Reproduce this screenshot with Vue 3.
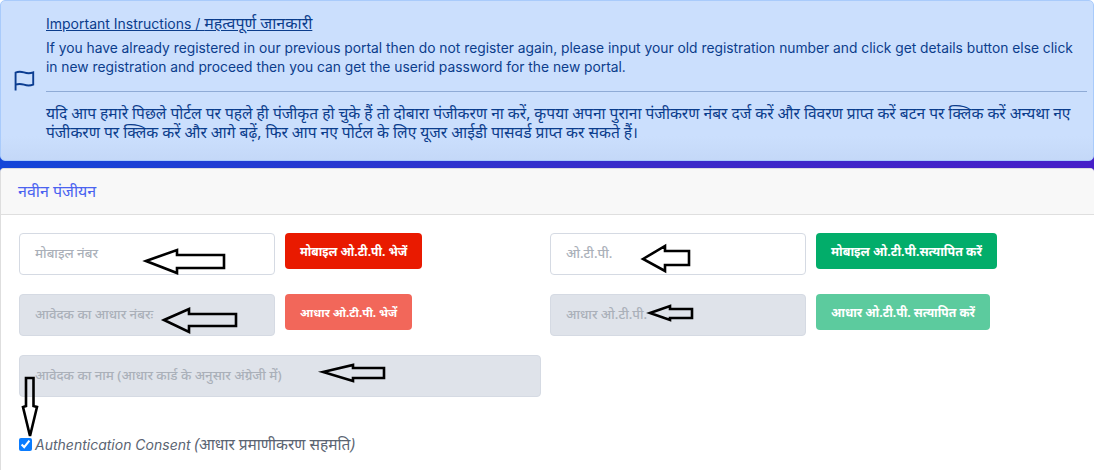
<script setup>
</script>

<template>
  <div class="page">
    <div class="top">
      <div class="alert">
        <div class="flag-col">
          <svg class="flag" viewBox="0 0 20 20" width="21" height="21" fill="none" stroke="#0b3d91" stroke-width="1.8">
            <path d="M1.5 19.5V2.500C4 1.300 6.500 1.300 9.500 2.300C12.500 3.300 15.500 3.300 18.300 2.300V14C15.500 15 12.500 15 9.500 14C6.500 13 4 13 1.500 14" />
          </svg>
        </div>
        <div class="alert-body">
          <div class="title">Important Instructions / <span class="hi">महत्वपूर्ण जानकारी</span></div>
          <p class="para en">If you have already registered in our previous portal then do not register again, please input your old registration number and click get details button else click in new registration and proceed then you can get the userid password for the new portal.</p>
          <hr class="rule" />
          <p class="para hi">यदि आप हमारे पिछले पोर्टल पर पहले ही पंजीकृत हो चुके हैं तो दोबारा पंजीकरण ना करें, कृपया अपना पुराना पंजीकरण नंबर दर्ज करें और विवरण प्राप्त करें बटन पर क्लिक करें अन्यथा नए पंजीकरण पर क्लिक करें और आगे बढ़ें, फिर आप नए पोर्टल के लिए यूजर आईडी पासवर्ड प्राप्त कर सकते हैं।</p>
        </div>
      </div>
    </div>

    <div class="card">
      <div class="card-head">नवीन पंजीयन</div>
      <div class="card-body">
        <div class="grid">
          <div class="cell">
            <div class="field">मोबाइल नंबर</div>
            <button class="btn red">मोबाइल ओ.टी.पी. भेजें</button>
          </div>
          <div class="cell">
            <div class="field">ओ.टी.पी.</div>
            <button class="btn green">मोबाइल ओ.टी.पी.सत्यापित करें</button>
          </div>
          <div class="cell">
            <div class="field off">आवेदक का आधार नंबरः</div>
            <button class="btn red faded">आधार ओ.टी.पी. भेजें</button>
          </div>
          <div class="cell">
            <div class="field off">आधार ओ.टी.पी.</div>
            <button class="btn green faded">आधार ओ.टी.पी. सत्यापित करें</button>
          </div>
          <div class="cell">
            <div class="field off wide">आवेदक का नाम (आधार कार्ड के अनुसार अंग्रेजी में)</div>
          </div>
        </div>
        <label class="consent">
          <input type="checkbox" checked />
          <span>Authentication Consent <span class="hi">(आधार प्रमाणीकरण सहमति)</span></span>
        </label>
      </div>
    </div>

    <svg class="arrows" width="1094" height="470" viewBox="0 0 1094 470" fill="none" stroke="#000" stroke-width="2.600">
      <path d="M146 261 L177 250 V255 H224 V268 H177 V273 Z" />
      <path d="M643 259 L665 246 V251 H689 V265 H665 V271 Z" />
      <path d="M164 320 L189 309 V314 H236 V326 H189 V332 Z" />
      <path d="M650 313 L670 306 V309 H692 V318 H670 V320 Z" />
      <path d="M323 372 L353 365 V368 H384 V378 H353 V381 Z" />
      <path d="M26 378 H33.500 V406 L37 407 L30 436 L23 407 L26 406 Z" />
    </svg>
  </div>
</template>

<style>
html, body { margin: 0; background: #fff; }
</style>

<style scoped>
.page {
  position: relative;
  display: flex;
  flex-direction: column;
  width: 1094px;
  height: 470px;
  overflow: hidden;
  font-family: Inter, "Noto Sans", sans-serif;
  background: #fff;
}
.hi { font-family: "Noto Sans", sans-serif; }
.top {
  padding-bottom: 11px;
  background: linear-gradient(90deg, #1346d8, #3a2bc9 60%, #461fc8) bottom / 100% 24px no-repeat;
}
.alert {
  box-sizing: border-box;
  height: 161px;
  display: flex;
  background: linear-gradient(180deg, #cbdffd 85%, #c4d8f8);
  border: 1px solid #a9cbfb;
  border-radius: 5px;
  color: #0b3d8c;
}
.flag-col {
  width: 45px;
  display: flex;
  align-items: center;
  padding-left: 13px;
  box-sizing: border-box;
}
.flag { display: block; flex: none; }
.alert-body { flex: 1; padding: 12px 0 0 0; min-width: 0; }
.title { font-size: 14px; line-height: 20px; text-decoration: underline; margin-bottom: 5px; }
.title .hi { font-size: 16px; }
.para { margin: 0; font-size: 13.800px; line-height: 19px; padding-right: 4px; }
.para.en { padding-right: 14px; }
.para.hi { font-size: 15.550px; }
.rule { border: 0; border-top: 1px solid #8fabd6; margin: 14px 6px 12px 0; }
.card {
  flex: 1;
  margin-top: -4px;
  background: #fff;
  border-left: 1px solid #dedede;
  border-top: 1px solid #dedede;
  border-radius: 4px 4px 0 0;
}
.card-head {
  height: 46px;
  line-height: 44px;
  padding-left: 17px;
  font-family: "Noto Sans", sans-serif;
  font-size: 16px;
  color: #4a63f0;
  background: #f8f8f8;
  border-bottom: 1px solid #dfdfdf;
  border-radius: 4px 4px 0 0;
  box-sizing: border-box;
}
.card-body { padding: 18px 18px 0; }
.grid {
  display: grid;
  grid-template-columns: 531px 1fr;
  row-gap: 19px;
}
.cell { display: flex; align-items: flex-start; gap: 10px; }
.field {
  box-sizing: border-box;
  width: 256px;
  height: 42px;
  line-height: 38px;
  padding-left: 15px;
  font-family: "Noto Sans", sans-serif;
  font-size: 13.200px;
  font-weight: 500;
  color: #aab0b9;
  border: 1px solid #d5dae3;
  border-radius: 4px;
  background: #fff;
}
.field.off { background: #dfe3ea; }
.field.wide { width: 522px; }
.btn {
  height: 36px;
  padding: 0 15px;
  border: 0;
  border-radius: 4px;
  font-family: "Noto Sans", sans-serif;
  font-weight: 700;
  color: #fff;
}
.red { background: #e91a00; font-size: 12px; }
.red.faded { background: #f2675a; font-size: 11.600px; }
.green { background: #02ad6a; font-size: 12.450px; }
.green.faded { background: #5ccb9e; font-size: 12.150px; }
.consent {
  display: flex;
  align-items: center;
  gap: 3px;
  margin-top: 36px;
  font-size: 14px;
  font-style: italic;
  color: #5b6472;
}
.consent .hi { font-size: 15.500px; }
.consent input { width: 13px; height: 13px; margin: 0; accent-color: #0a7cff; }
.arrows { position: absolute; left: 0; top: 0; pointer-events: none; }
</style>
